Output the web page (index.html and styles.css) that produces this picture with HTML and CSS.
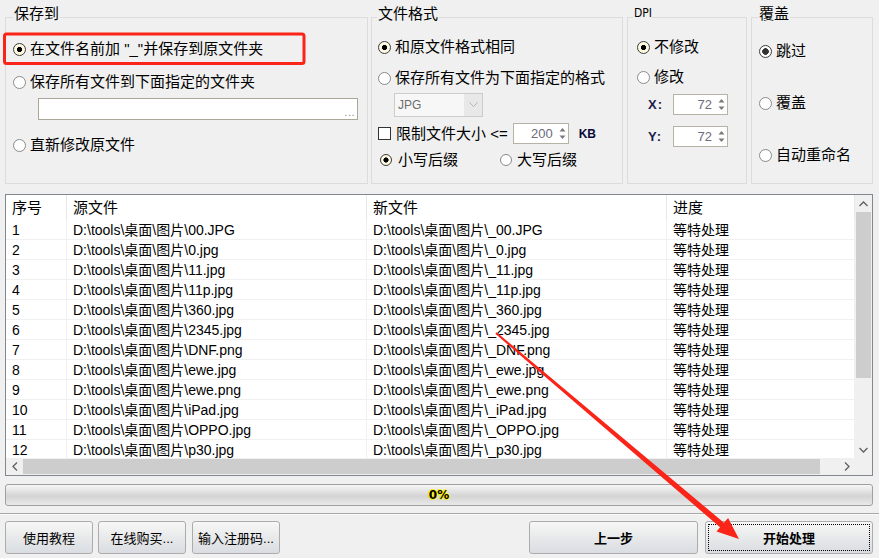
FILE: index.html
```html
<!DOCTYPE html>
<html lang="zh-CN">
<head>
<meta charset="utf-8">
<title>批量处理</title>
<link rel="stylesheet" href="styles.css">
</head>
<body>
<div class="app">
  <div class="groups">
    <fieldset class="grp g1">
      <legend>保存到</legend>
      <div class="row"><span class="radio on"></span><span>在文件名前加 "_"并保存到原文件夹</span></div>
      <div class="row r2"><span class="radio"></span><span>保存所有文件到下面指定的文件夹</span></div>
      <div class="pathbox"><span class="dots">...</span></div>
      <div class="row r3"><span class="radio"></span><span>直新修改原文件</span></div>
    </fieldset>
    <fieldset class="grp g2">
      <legend>文件格式</legend>
      <div class="row"><span class="radio on"></span><span>和原文件格式相同</span></div>
      <div class="row f2"><span class="radio"></span><span>保存所有文件为下面指定的格式</span></div>
      <div class="combo"><span class="combo-text">JPG</span><span class="combo-btn"><svg width="9" height="6" viewBox="0 0 9 6"><polyline points="0.5,0.5 4.5,4.5 8.5,0.5" fill="none" stroke="#b5b5b5" stroke-width="1"/></svg></span></div>
      <div class="row chkrow"><span class="check"></span><span>限制文件大小 &lt;=</span><span class="spin w56"><span class="spin-val">200</span><span class="spin-arrows"><svg width="7" height="13" viewBox="0 0 7 13"><polygon points="3.5,1 6.5,4.5 0.5,4.5" fill="#7a7a7a"/><polygon points="3.5,12 6.5,8.5 0.5,8.5" fill="#7a7a7a"/></svg></span></span><span class="unit">KB</span></div>
      <div class="row f4"><span class="opt1"><span class="radio sm on"></span><span>小写后缀</span></span><span class="opt2"><span class="radio sm"></span><span>大写后缀</span></span></div>
    </fieldset>
    <fieldset class="grp g3">
      <legend class="dpi">DPI</legend>
      <div class="row"><span class="radio on"></span><span>不修改</span></div>
      <div class="row d2"><span class="radio"></span><span>修改</span></div>
      <div class="row xy x"><span class="xylabel">X:</span><span class="spin w55"><span class="spin-val">72</span><span class="spin-arrows"><svg width="7" height="13" viewBox="0 0 7 13"><polygon points="3.5,1 6.5,4.5 0.5,4.5" fill="#7a7a7a"/><polygon points="3.5,12 6.5,8.5 0.5,8.5" fill="#7a7a7a"/></svg></span></span></div>
      <div class="row xy y"><span class="xylabel">Y:</span><span class="spin w55"><span class="spin-val">72</span><span class="spin-arrows"><svg width="7" height="13" viewBox="0 0 7 13"><polygon points="3.5,1 6.5,4.5 0.5,4.5" fill="#7a7a7a"/><polygon points="3.5,12 6.5,8.5 0.5,8.5" fill="#7a7a7a"/></svg></span></span></div>
    </fieldset>
    <fieldset class="grp g4">
      <legend>覆盖</legend>
      <div class="row"><span class="radio on dark"></span><span>跳过</span></div>
      <div class="row o2"><span class="radio"></span><span>覆盖</span></div>
      <div class="row o2"><span class="radio"></span><span>自动重命名</span></div>
    </fieldset>
  </div>

  <div class="list">
    <div class="viewport">
      <div class="tr th"><div class="td">序号</div><div class="td">源文件</div><div class="td">新文件</div><div class="td">进度</div></div>
      <div class="tr"><div class="td">1</div><div class="td">D:\tools\桌面\图片\00.JPG</div><div class="td">D:\tools\桌面\图片\_00.JPG</div><div class="td">等特处理</div></div>
      <div class="tr"><div class="td">2</div><div class="td">D:\tools\桌面\图片\0.jpg</div><div class="td">D:\tools\桌面\图片\_0.jpg</div><div class="td">等特处理</div></div>
      <div class="tr"><div class="td">3</div><div class="td">D:\tools\桌面\图片\11.jpg</div><div class="td">D:\tools\桌面\图片\_11.jpg</div><div class="td">等特处理</div></div>
      <div class="tr"><div class="td">4</div><div class="td">D:\tools\桌面\图片\11p.jpg</div><div class="td">D:\tools\桌面\图片\_11p.jpg</div><div class="td">等特处理</div></div>
      <div class="tr"><div class="td">5</div><div class="td">D:\tools\桌面\图片\360.jpg</div><div class="td">D:\tools\桌面\图片\_360.jpg</div><div class="td">等特处理</div></div>
      <div class="tr"><div class="td">6</div><div class="td">D:\tools\桌面\图片\2345.jpg</div><div class="td">D:\tools\桌面\图片\_2345.jpg</div><div class="td">等特处理</div></div>
      <div class="tr"><div class="td">7</div><div class="td">D:\tools\桌面\图片\DNF.png</div><div class="td">D:\tools\桌面\图片\_DNF.png</div><div class="td">等特处理</div></div>
      <div class="tr"><div class="td">8</div><div class="td">D:\tools\桌面\图片\ewe.jpg</div><div class="td">D:\tools\桌面\图片\_ewe.jpg</div><div class="td">等特处理</div></div>
      <div class="tr"><div class="td">9</div><div class="td">D:\tools\桌面\图片\ewe.png</div><div class="td">D:\tools\桌面\图片\_ewe.png</div><div class="td">等特处理</div></div>
      <div class="tr"><div class="td">10</div><div class="td">D:\tools\桌面\图片\iPad.jpg</div><div class="td">D:\tools\桌面\图片\_iPad.jpg</div><div class="td">等特处理</div></div>
      <div class="tr"><div class="td">11</div><div class="td">D:\tools\桌面\图片\OPPO.jpg</div><div class="td">D:\tools\桌面\图片\_OPPO.jpg</div><div class="td">等特处理</div></div>
      <div class="tr"><div class="td">12</div><div class="td">D:\tools\桌面\图片\p30.jpg</div><div class="td">D:\tools\桌面\图片\_p30.jpg</div><div class="td">等特处理</div></div>
    </div>
    <div class="vscroll">
      <div class="sb-btn"><svg width="9" height="6" viewBox="0 0 9 6"><polyline points="0.5,5 4.5,1 8.5,5" fill="none" stroke="#606060" stroke-width="1.3"/></svg></div>
      <div class="vthumb"></div>
      <div class="sb-fill"></div>
      <div class="sb-btn"><svg width="9" height="6" viewBox="0 0 9 6"><polyline points="0.5,1 4.5,5 8.5,1" fill="none" stroke="#606060" stroke-width="1.3"/></svg></div>
    </div>
    <div class="hscroll">
      <div class="sb-btn"><svg width="6" height="9" viewBox="0 0 6 9"><polyline points="5,0.5 1,4.5 5,8.5" fill="none" stroke="#606060" stroke-width="1.3"/></svg></div>
      <div class="hthumb"></div>
      <div class="sb-fill"></div>
      <div class="sb-btn"><svg width="6" height="9" viewBox="0 0 6 9"><polyline points="1,0.5 5,4.5 1,8.5" fill="none" stroke="#606060" stroke-width="1.3"/></svg></div>
    </div>
    <div class="corner"></div>
  </div>

  <div class="progress"><span>0%</span></div>
  <div class="sep"></div>

  <div class="buttons">
    <button class="btn">使用教程</button>
    <button class="btn b2">在线购买...</button>
    <button class="btn b3">输入注册码...</button>
    <button class="btn big prev">上一步</button>
    <button class="btn big start">开始处理</button>
  </div>

  <svg class="annot" width="879" height="558" viewBox="0 0 879 558">
    <rect x="4.5" y="34" width="299.5" height="29.5" rx="2" fill="none" stroke="#fa2418" stroke-width="3"/>
    <polygon points="496.65,332.24 723.94,522.72 728.1,517.9 739,539 716.5,531.5 720.06,527.28 495.35,333.76" fill="#fa2418"/>
  </svg>
</div>
</body>
</html>
```
FILE: styles.css
```css
html, body {
  margin: 0;
  padding: 0;
}
body {
  background: #f0f0f0;
  font-family: "Liberation Sans", "Noto Sans CJK SC", sans-serif;
  color: #000;
}
.app {
  position: relative;
  width: 879px;
  height: 558px;
  overflow: hidden;
  background: #f0f0f0;
}

/* ---------- group boxes ---------- */
.groups {
  display: flex;
  padding: 5px 0 0 5px;
  height: 179px;
}
.grp {
  margin: 0;
  padding: 0;
  min-width: 0;
  border: 1px solid #dcdcdc;
  height: 179px;
  box-sizing: border-box;
}
.grp legend {
  font-size: 15px;
  line-height: 17px;
  padding: 0 1px 8px;
  color: #000;
}
.g1 { width: 363px; margin-right: 3px; padding: 9px 0 0 7px; }
.g2 { width: 252px; margin-right: 4px; padding: 7px 0 0 6px; }
.g3 { width: 120px; margin-right: 4px; padding: 7px 0 0 9px; }
.g4 { width: 122px; padding: 11px 0 0 7px; }
.g1 legend { margin-left: 0; }
.g2 legend { margin-left: -1px; }
.g3 legend { margin-left: -4px; }
.g4 legend { margin-left: -1px; }
.grp legend.dpi {
  font-size: 12px;
  font-family: "DejaVu Sans Condensed", "DejaVu Sans", sans-serif;
  font-stretch: condensed;
  padding-right: 0;
}

.row {
  display: flex;
  align-items: center;
  height: 20px;
  font-size: 15px;
  line-height: 20px;
  white-space: nowrap;
}
.radio {
  flex: none;
  width: 13px;
  height: 13px;
  box-sizing: border-box;
  border-radius: 50%;
  border: 1px solid #8a8a8a;
  background: #fff;
  margin-right: 4px;
}
.radio.on {
  border-color: #3c3c3c;
  background: radial-gradient(circle, #000 0, #000 2.3px, #fff8e0 2.9px);
}
.radio.on.dark {
  background: radial-gradient(circle, #333 0, #333 3px, #fff 3.6px);
}
.radio.sm {
  width: 12px;
  height: 12px;
  margin-right: 6px;
}
.check {
  flex: none;
  width: 13px;
  height: 13px;
  box-sizing: border-box;
  border: 1px solid #333;
  background: #fff;
  margin-right: 5px;
}

/* group 1 */
.g1 .r2 { margin-top: 13px; }
.pathbox {
  margin: 6px 0 0 25px;
  width: 320px;
  height: 22px;
  box-sizing: border-box;
  border: 1px solid #aca899;
  background: #fff;
  display: flex;
  justify-content: flex-end;
  align-items: flex-end;
}
.dots {
  font-size: 11px;
  line-height: 14px;
  color: #8a8a8a;
  padding-right: 2px;
  letter-spacing: 0.5px;
}
.g1 .r3 { margin-top: 15px; }

/* group 2 */
.g2 .f2 { margin-top: 11px; }
.combo {
  margin: 5px 0 0 16px;
  width: 89px;
  height: 24px;
  box-sizing: border-box;
  border: 1px solid #cccccc;
  background: #f7f7f7;
  display: flex;
}
.combo-text {
  flex: 1;
  font-size: 12px;
  line-height: 22px;
  padding-left: 3px;
  color: #6d6d6d;
}
.combo-btn {
  width: 18px;
  display: flex;
  align-items: center;
  justify-content: center;
  background: #e8e8e8;
}
.chkrow {
  margin-top: 6px;
  height: 21px;
}
.spin {
  flex: none;
  height: 21px;
  box-sizing: border-box;
  border: 1px solid #b6b2a6;
  background: #fff;
  display: flex;
  align-items: center;
}
.spin.w56 { width: 56px; margin-left: 5px; }
.spin.w55 { width: 55px; }
.spin-val {
  flex: 1;
  text-align: right;
  font-size: 13px;
  color: #6b6b7a;
  padding-right: 4px;
}
.spin-arrows {
  width: 11px;
  display: flex;
  justify-content: center;
}
.unit {
  margin-left: 10px;
  font-size: 12px;
  font-weight: bold;
  color: #0a0a3a;
}
.f4 { margin-top: 6px; }
.opt1 {
  display: flex;
  align-items: center;
  width: 120px;
  margin-left: 2px;
}
.opt2 {
  display: flex;
  align-items: center;
}
.f4 .opt2 .radio { margin-right: 5px; }

/* group 3 */
.g3 .d2 { margin-top: 10px; }
.g3 .xy { height: 21px; }
.g3 .x { margin-top: 7px; }
.g3 .y { margin-top: 11px; }
.xylabel {
  width: 25px;
  margin-left: 11px;
  font-size: 13px;
  font-weight: bold;
  color: #1c1c4a;
  letter-spacing: 1px;
}

/* group 4 */
.g4 .o2 { margin-top: 32px; }

/* ---------- list ---------- */
.list {
  margin: 10px 0 0 5px;
  width: 868px;
  height: 282px;
  box-sizing: border-box;
  border: 1px solid #828790;
  background: #fff;
  display: grid;
  grid-template-columns: 849px 17px;
  grid-template-rows: 263px 17px;
}
.viewport {
  overflow: hidden;
  background: #fff;
}
.tr {
  display: grid;
  grid-template-columns: 61px 300px 300px 188px;
  height: 20px;
  box-sizing: border-box;
  border-bottom: 1px solid #f0f0f0;
  font-size: 14px;
  line-height: 19px;
}
.tr .td {
  padding: 1px 0 0 6px;
  border-right: 1px solid #f0f0f0;
  white-space: nowrap;
  overflow: hidden;
}
.tr.th {
  height: 25px;
  border-bottom: none;
  font-size: 15px;
  line-height: 25px;
}
.tr.th .td {
  padding-top: 0;
  border-right: 1px solid #e8e8e8;
}
.vscroll {
  background: #f0f0f0;
  display: flex;
  flex-direction: column;
}
.vscroll .sb-btn {
  height: 17px;
  display: flex;
  align-items: center;
  justify-content: center;
}
.vthumb {
  height: 166px;
  margin: 0 1px;
  background: #cdcdcd;
}
.sb-fill { flex: 1; }
.hscroll {
  background: #f0f0f0;
  display: flex;
}
.hscroll .sb-btn {
  width: 17px;
  display: flex;
  align-items: center;
  justify-content: center;
}
.hthumb {
  width: 797px;
  margin: 1px 0;
  background: #cdcdcd;
}
.corner { background: #f0f0f0; }

/* ---------- progress ---------- */
.progress {
  margin: 8px 0 0 5px;
  width: 868px;
  height: 22px;
  box-sizing: border-box;
  border: 1px solid #a0a0a0;
  border-radius: 3px;
  background: linear-gradient(#f6f6f6 0%, #dedede 40%, #d3d3d3 55%, #e9e9e9 100%);
  display: flex;
  align-items: center;
  justify-content: center;
}
.progress span {
  font-size: 12px;
  font-weight: bold;
  font-family: "DejaVu Sans", sans-serif;
  color: #000;
  text-shadow: 0 0 1px #ffe800, 1px 0 0 #fff000, -1px 0 0 #fff000, 0 1px 0 #fff000, 0 -1px 0 #fff000;
}
.sep {
  margin-top: 7px;
  height: 0;
  border-top: 1px solid #a8a8a8;
  border-bottom: 1px solid #fafafa;
}

/* ---------- buttons ---------- */
.buttons {
  display: flex;
  margin-top: 6px;
  padding-left: 5px;
  height: 33px;
}
.btn {
  height: 33px;
  box-sizing: border-box;
  border: 1px solid #acacac;
  border-radius: 3px;
  background: linear-gradient(#f7f7f7, #e8e9ea 50%, #d9dde2);
  font-family: "Liberation Sans", "Noto Sans CJK SC", sans-serif;
  font-size: 13px;
  color: #000;
  padding: 0;
  width: 88px;
}
.b2 { margin-left: 5px; }
.b3 { margin-left: 6px; }
.big {
  font-weight: bold;
  font-size: 13px;
}
.prev {
  margin-left: auto;
  width: 169px;
}
.start {
  margin-left: 7px;
  margin-right: 6px;
  width: 168px;
  outline: 1px dotted #000;
  outline-offset: -4px;
}

/* ---------- annotation overlay ---------- */
.annot {
  position: absolute;
  left: 0;
  top: 0;
  pointer-events: none;
}
```
